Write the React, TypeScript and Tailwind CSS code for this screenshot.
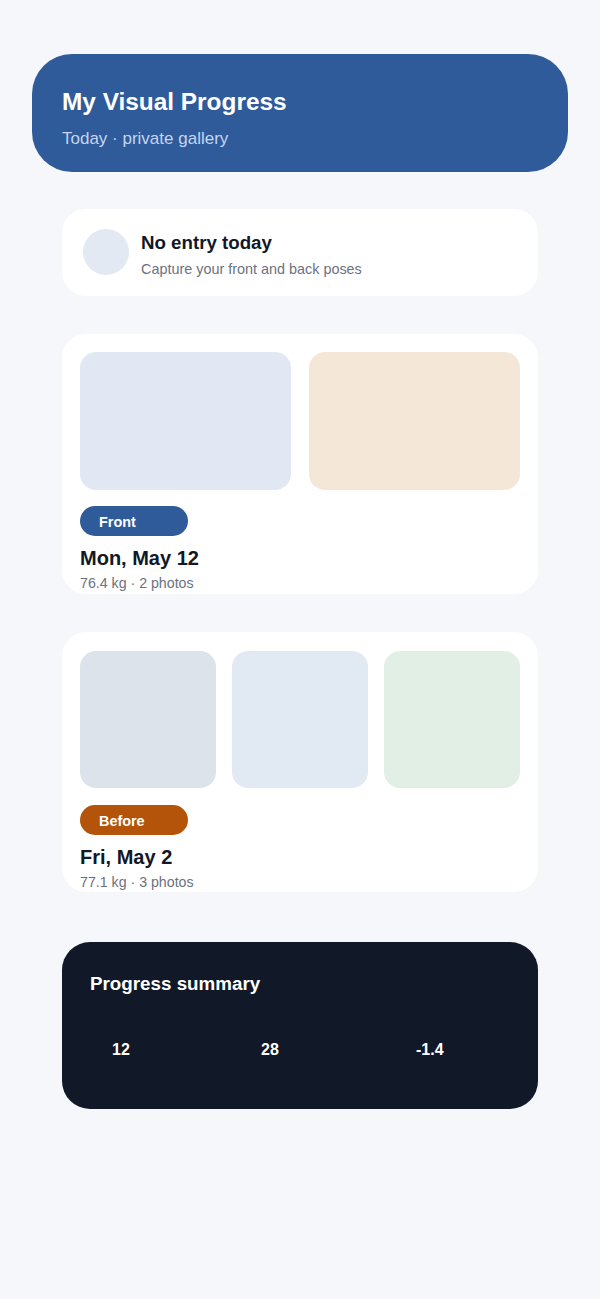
const entries = [
  {
    label: "Front",
    badge: "bg-[#2f5b9a]",
    date: "Mon, May 12",
    meta: "76.4 kg · 2 photos",
    photos: ["bg-[#e2e8f3]", "bg-[#f4e7d8]"],
    card: "pt-[18px] pb-px",
    grid: "grid grid-cols-2 gap-[18px]",
    h: "h-[138px]",
    badgeTop: "mt-4",
  },
  {
    label: "Before",
    badge: "bg-[#b4540a]",
    date: "Fri, May 2",
    meta: "77.1 kg · 3 photos",
    photos: ["bg-[#dce3eb]", "bg-[#e1e9f3]", "bg-[#e1efe5]"],
    card: "pt-[19px]",
    grid: "grid grid-cols-3 gap-4",
    h: "h-[137px]",
    badgeTop: "mt-[17px]",
  },
];

export default function App() {
  return (
    <div
      className="min-h-[1299px] bg-[#f5f7fa] pt-[54px] pb-10"
      style={{ fontFamily: '"Liberation Sans", Arial, sans-serif' }}
    >
      {/* Header */}
      <header className="mx-8 rounded-[40px] bg-[#2f5b9a] px-[30px] pt-[32px] pb-[21px]">
        <h1 className="text-[24.4px] leading-8 font-bold text-white">My Visual Progress</h1>
        <p className="mt-[9px] text-[17px] leading-6 text-[#c3d5f1]">Today · private gallery</p>
      </header>

      <div className="mx-[62px] mt-[37px] flex flex-col gap-[38px]">
        {/* Today status */}
        <div className="flex h-[87px] items-start gap-3 rounded-3xl bg-white px-[21px] pt-5">
          <div className="h-[46px] w-[46px] shrink-0 rounded-full bg-[#e3e9f3]" />
          <div className="pt-[2px]">
            <div className="text-[18.7px] leading-6 font-bold text-[#111827]">No entry today</div>
            <div className="mt-[4px] text-[14.4px] leading-5 text-[#6b7280]">
              Capture your front and back poses
            </div>
          </div>
        </div>

        {/* Entries */}
        {entries.map((e) => (
          <div key={e.date} className={`rounded-3xl bg-white px-[18px] ${e.card}`}>
            <div className={e.grid}>
              {e.photos.map((p, i) => (
                <div key={i} className={`rounded-2xl ${e.h} ${p}`} />
              ))}
            </div>
            <div
              className={`flex h-[30px] w-[108px] items-center rounded-full pt-[4px] pl-[19px] text-[14.4px] font-bold text-white ${e.badgeTop} ${e.badge}`}
            >
              {e.label}
            </div>
            <div className="mt-2 text-[20px] leading-7 font-bold text-[#111827]">{e.date}</div>
            <div className="pt-px text-[14.2px] leading-5 text-[#6b7280]">{e.meta}</div>
          </div>
        ))}
      </div>

      {/* Summary */}
      <section className="mx-[62px] mt-[50px] rounded-[28px] bg-[#111827] pt-[28px] pb-[47px] pl-[28px]">
        <h2 className="text-[18.8px] leading-7 font-bold text-white">Progress summary</h2>
        <div className="mt-10 grid grid-cols-[149px_155px_1fr] pl-[22px] text-[16px] leading-6 font-bold text-white">
          <div>12</div>
          <div>28</div>
          <div>-1.4</div>
        </div>
      </section>
    </div>
  );
}
